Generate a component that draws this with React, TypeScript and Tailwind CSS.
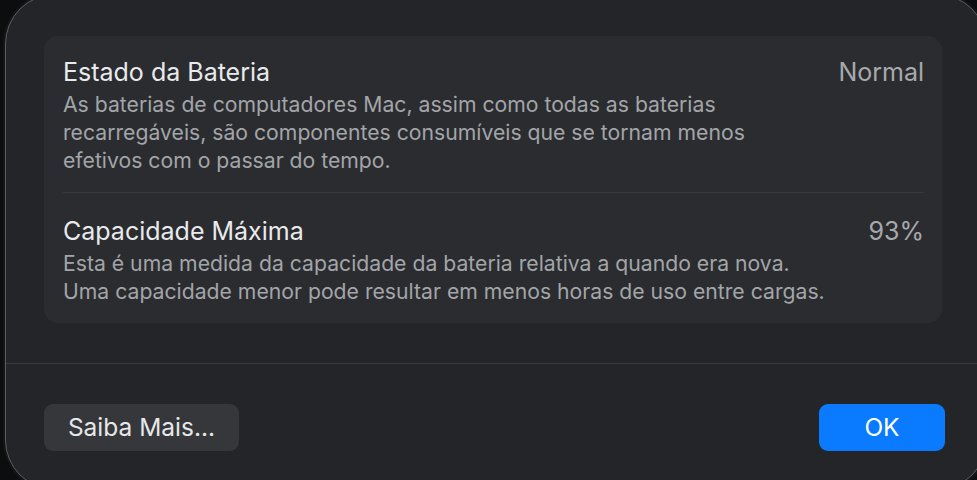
import React from "react";

const font = { fontFamily: "Inter, 'Noto Sans', 'Liberation Sans', sans-serif" };

function Row({
  title,
  value,
  lines,
}: {
  title: string;
  value: string;
  lines: string[];
}) {
  return (
    <div className="flex items-start justify-between">
      <div className="flex flex-col">
        <div className="text-[25px] leading-[32px] text-[#e9eaeb]">{title}</div>
        <div className="mt-[2px] text-[21.2px] leading-[28px] text-[#a3a5a8]">
          {lines.map((l) => (
            <div key={l}>{l}</div>
          ))}
        </div>
      </div>
      <div className="text-[25px] leading-[32px] text-[#a7a9ac]">{value}</div>
    </div>
  );
}

export default function App() {
  return (
    <div className="w-[977px] h-[480px] overflow-hidden bg-[#0c0d0e]" style={font}>
      <div className="ml-[5px] mt-[-6px] w-[982px] h-[496px] rounded-[50px] border border-[#5b5d61] bg-[#232528] flex flex-col shadow-[0_0_0_2px_#141516]">
        <div className="pl-[38px] pt-[41px]">
          <div className="w-[898px] rounded-[14px] bg-[#2a2c30] pl-[19px] pr-[18px] pt-[20px] pb-[18px]">
            <Row
              title="Estado da Bateria"
              value="Normal"
              lines={[
                "As baterias de computadores Mac, assim como todas as baterias",
                "recarregáveis, são componentes consumíveis que se tornam menos",
                "efetivos com o passar do tempo.",
              ]}
            />
            <div className="mt-[18px] mb-[22px] h-px bg-[#37393d]" />
            <Row
              title="Capacidade Máxima"
              value="93%"
              lines={[
                "Esta é uma medida da capacidade da bateria relativa a quando era nova.",
                "Uma capacidade menor pode resultar em menos horas de uso entre cargas.",
              ]}
            />
          </div>
        </div>
        <div className="mt-[40px] h-px bg-[#37393a]" />
        <div className="flex items-center pl-[38px] pt-[40px]">
          <button className="h-[47px] w-[195px] rounded-[9px] bg-[#35373a] text-[24.5px] text-[#e6e7e8]">
            Saiba Mais...
          </button>
          <div className="w-[580px]" />
          <button className="h-[47px] w-[126px] rounded-[9px] bg-[#0a7bff] text-[24.5px] text-white">
            OK
          </button>
        </div>
      </div>
    </div>
  );
}
